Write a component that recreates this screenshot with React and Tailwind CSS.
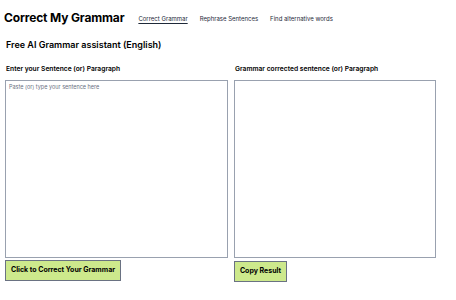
export default function App() {
  return (
    <div className="min-h-[300px] w-[456px] bg-white font-['Inter',sans-serif] text-black">
      <header className="flex items-end px-[4px] pt-[10px]">
        <h1 className="text-[12px] font-bold leading-[16px] tracking-[-0.15px]">Correct My Grammar</h1>
        <nav className="ml-[14px] flex gap-[12px] pb-[3px] text-[6px] text-gray-800">
          <a className="underline underline-offset-[2px]">Correct Grammar</a>
          <a>Rephrase Sentences</a>
          <a>Find alternative words</a>
        </nav>
      </header>

      <h2 className="mt-[13px] px-[6px] text-[9px] font-semibold leading-[12px]">Free AI Grammar assistant (English)</h2>

      <section className="mt-[14px] flex gap-[6px] px-[5px]">
        <div className="flex w-[223px] flex-col">
          <label className="pl-[1px] text-[6.7px] font-semibold leading-[9px]">Enter your Sentence (or) Paragraph</label>
          <textarea
            className="mt-[6px] h-[178px] w-full resize-none border border-gray-400 px-[3px] py-[2px] text-[5.5px] outline-none placeholder:text-gray-500"
            placeholder="Paste (or) type your sentence here"
          />
          <button className="mt-[2px] h-[21px] w-[116px] border border-gray-500 bg-[#cde98c] text-[7px] font-bold">
            Click to Correct Your Grammar
          </button>
        </div>
        <div className="flex w-[202px] flex-col">
          <label className="pl-[1px] text-[6.7px] font-semibold leading-[9px]">Grammar corrected sentence (or) Paragraph</label>
          <textarea className="mt-[6px] h-[178px] w-full resize-none border border-gray-400 outline-none" readOnly />
          <button className="mt-[3px] h-[21px] w-[53px] border border-gray-500 bg-[#cde98c] text-[7px] font-bold">
            Copy Result
          </button>
        </div>
      </section>
    </div>
  );
}
